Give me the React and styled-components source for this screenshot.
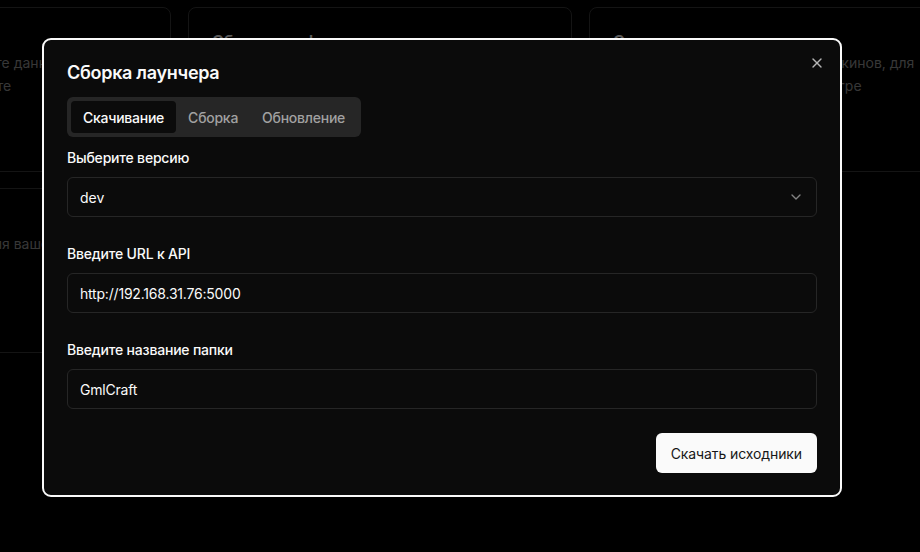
import React from 'react';
import styled, { createGlobalStyle } from 'styled-components';
import { X, ChevronDown } from 'lucide-react';

// --------------------------------------
// Global
// --------------------------------------
const GlobalStyle = createGlobalStyle`
    html, body {
        margin: 0;
        padding: 0;
        background: #000;
        overflow: hidden;
    }
    body {
        font-family: Inter, "Noto Sans", sans-serif;
        color: #fafafa;
    }
    * { box-sizing: border-box; }
`;

const cards = [
    [
        { title: 'Интеграция с сайтом', lines: ['Подключите сайт, получайте данные игроков', 'из личного профиля на сайте'] },
        { title: 'Сборка профиля', lines: ['Соберите профиль игрока на сервере'] },
        { title: 'Сервис скинов', lines: ['Загрузите и настройте систему скинов, для', 'корректного их отображения в игре'] },
    ],
    [
        { title: 'Авторизация', lines: ['Настройте способ входа для вашего лаунчера'] },
        { title: 'Новости', lines: ['Подключите ленту новостей проекта'] },
    ],
];

// --------------------------------------
// Component
// --------------------------------------
const App = () => {
    const tabs = ['Скачивание', 'Сборка', 'Обновление'];
    const active = 0;

    return (
        <>
            <GlobalStyle />
            <Page>
                {cards.map((row, i) => (
                    <CardRow key={i}>
                        {row.map((c) => (
                            <Card key={c.title}>
                                <CardTitle>{c.title}</CardTitle>
                                {c.lines.map((l) => (
                                    <CardText key={l}>{l}</CardText>
                                ))}
                            </Card>
                        ))}
                    </CardRow>
                ))}
            </Page>

            <Overlay />

            <Dialog>
                <Close aria-label="close">
                    <X size={16} strokeWidth={2} />
                </Close>
                <Title>Сборка лаунчера</Title>

                <TabsList>
                    {tabs.map((t, i) => (
                        <Tab key={t} $active={i === active}>{t}</Tab>
                    ))}
                </TabsList>

                <Field>
                    <Label>Выберите версию</Label>
                    <SelectBox>
                        <span>dev</span>
                        <ChevronDown size={16} />
                    </SelectBox>
                </Field>

                <Field>
                    <Label>Введите URL к API</Label>
                    <Input defaultValue="http://192.168.31.76:5000" />
                </Field>

                <Field>
                    <Label>Введите название папки</Label>
                    <Input defaultValue="GmlCraft" />
                </Field>

                <Footer>
                    <Button>Скачать исходники</Button>
                </Footer>
            </Dialog>
        </>
    );
};

// --------------------------------------
// Styles
// --------------------------------------
const Page = styled.div`
    display: flex;
    flex-direction: column;
    gap: 16px;
    padding-top: 7px;
    margin-left: -213px;
    width: 1200px;
`;

const CardRow = styled.div`
    display: grid;
    grid-template-columns: repeat(3, 384px);
    gap: 17px;
`;

const Card = styled.div`
    height: 165px;
    border: 1px solid #333;
    border-radius: 8px;
    padding: 23px;
`;

const CardTitle = styled.div`
    font-size: 16px;
    font-weight: 600;
    line-height: 20px;
    color: #e0e0e0;
`;

const CardText = styled.div`
    font-size: 14px;
    line-height: 23px;
    white-space: nowrap;
    color: #8a8a8a;
`;

const Overlay = styled.div`
    position: fixed;
    inset: 0;
    background: rgba(0, 0, 0, 0.6);
`;

const Dialog = styled.div`
    position: fixed;
    left: 42px;
    top: 38px;
    width: 800px;
    background: #0b0b0b;
    border: 2px solid #fafafa;
    border-radius: 9px;
    padding: 23px 23px 22px;
    display: flex;
    flex-direction: column;
`;

const Close = styled.button`
    position: absolute;
    top: 15px;
    right: 15px;
    padding: 0;
    border: none;
    background: none;
    color: #b5b5b5;
    display: flex;
`;

const Title = styled.h2`
    margin: 0 0 14px;
    font-size: 18px;
    font-weight: 600;
    line-height: 20px;
    letter-spacing: -0.3px;
`;

const TabsList = styled.div`
    display: flex;
    align-self: flex-start;
    height: 40px;
    padding: 4px;
    background: #262626;
    border-radius: 6px;
    margin-bottom: 12px;
`;

const Tab = styled.div`
    display: flex;
    align-items: center;
    padding: 0 12px;
    border-radius: 4px;
    font-size: 14px;
    font-weight: 500;
    letter-spacing: -0.25px;
    color: ${(p) => (p.$active ? '#fafafa' : '#a1a1a1')};
    background: ${(p) => (p.$active ? '#0b0b0b' : 'transparent')};
`;

const Field = styled.div`
    display: flex;
    flex-direction: column;
    gap: 12px;
    padding-top: 2px;
    & + & {
        margin-top: 30px;
        padding-top: 0;
    }
`;

const Label = styled.label`
    font-size: 14px;
    font-weight: 500;
    line-height: 14px;
    color: #fafafa;
    letter-spacing: -0.2px;
`;

const SelectBox = styled.div`
    display: flex;
    align-items: center;
    justify-content: space-between;
    height: 40px;
    padding: 0 12px;
    border: 1px solid #262626;
    border-radius: 6px;
    font-size: 14px;
    color: #fafafa;
    svg {
        opacity: 0.5;
    }
`;

const Input = styled.input`
    height: 40px;
    padding: 0 12px;
    border: 1px solid #262626;
    border-radius: 6px;
    background: transparent;
    font-family: inherit;
    font-size: 14px;
    letter-spacing: -0.2px;
    color: #fafafa;
    outline: none;
`;

const Footer = styled.div`
    display: flex;
    justify-content: flex-end;
    margin-top: 24px;
`;

const Button = styled.button`
    height: 40px;
    padding: 0 15px;
    border: none;
    border-radius: 6px;
    background: #fafafa;
    color: #171717;
    font-family: inherit;
    font-size: 14px;
    font-weight: 400;
    letter-spacing: -0.1px;
`;

export default App;
